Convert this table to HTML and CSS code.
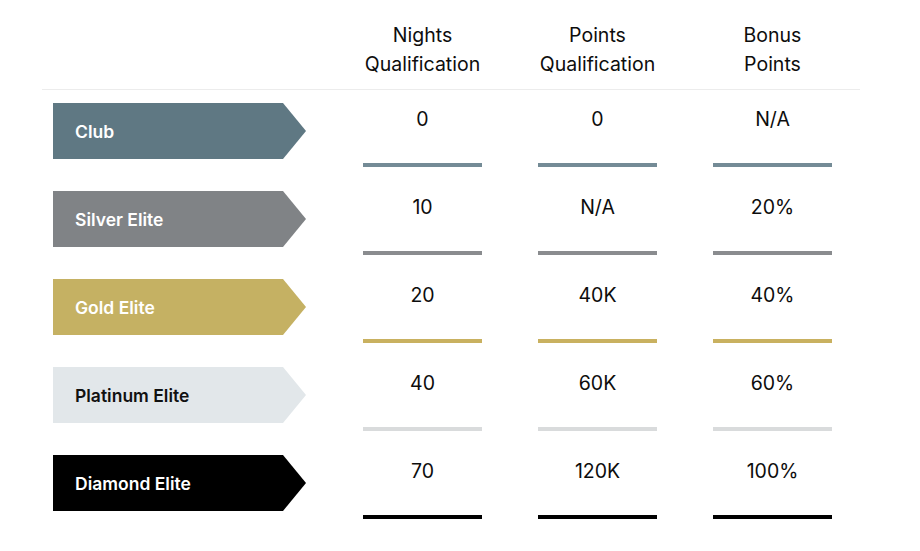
FILE: index.html
```html
<!DOCTYPE html>
<html lang="en">
<head>
<meta charset="utf-8">
<title>Tiers</title>
<link rel="stylesheet" href="styles.css">
</head>
<body>
<div class="table">
  <div class="head">
    <div class="hcell first"></div>
    <div class="hcell">Nights<br>Qualification</div>
    <div class="hcell">Points<br>Qualification</div>
    <div class="hcell">Bonus<br>Points</div>
  </div>

  <div class="row club">
    <div class="tier"><div class="banner">Club</div></div>
    <div class="val"><span>0</span><i class="bar"></i></div>
    <div class="val"><span>0</span><i class="bar"></i></div>
    <div class="val"><span>N/A</span><i class="bar"></i></div>
  </div>

  <div class="row silver">
    <div class="tier"><div class="banner">Silver Elite</div></div>
    <div class="val"><span>10</span><i class="bar"></i></div>
    <div class="val"><span>N/A</span><i class="bar"></i></div>
    <div class="val"><span>20%</span><i class="bar"></i></div>
  </div>

  <div class="row gold">
    <div class="tier"><div class="banner">Gold Elite</div></div>
    <div class="val"><span>20</span><i class="bar"></i></div>
    <div class="val"><span>40K</span><i class="bar"></i></div>
    <div class="val"><span>40%</span><i class="bar"></i></div>
  </div>

  <div class="row platinum">
    <div class="tier"><div class="banner">Platinum Elite</div></div>
    <div class="val"><span>40</span><i class="bar"></i></div>
    <div class="val"><span>60K</span><i class="bar"></i></div>
    <div class="val"><span>60%</span><i class="bar"></i></div>
  </div>

  <div class="row diamond">
    <div class="tier"><div class="banner">Diamond Elite</div></div>
    <div class="val"><span>70</span><i class="bar"></i></div>
    <div class="val"><span>120K</span><i class="bar"></i></div>
    <div class="val"><span>100%</span><i class="bar"></i></div>
  </div>
</div>
</body>
</html>
```

FILE: styles.css
```css
html, body {
  margin: 0;
  padding: 0;
  background: #ffffff;
}
body {
  font-family: "Inter", "Roboto", "Liberation Sans", sans-serif;
  color: #0d0d0d;
}
.table {
  margin-left: 42px;
  width: 818px;
}
.head {
  display: flex;
  height: 90px;
  box-sizing: border-box;
  padding-top: 21px;
  border-bottom: 1px solid #ececec;
}
.hcell {
  width: 175px;
  text-align: center;
  font-size: 19.5px;
  line-height: 29px;
}
.hcell.first, .tier {
  width: 293px;
  flex: none;
}
.row {
  display: flex;
  height: 88px;
  box-sizing: border-box;
  padding-top: 13px;
}
.tier {
  padding-left: 11px;
  box-sizing: border-box;
}
.banner {
  width: 253px;
  height: 56px;
  box-sizing: border-box;
  padding-left: 22px;
  padding-top: 1px;
  display: flex;
  align-items: center;
  font-size: 17.5px;
  font-weight: 600;
  color: #ffffff;
  clip-path: polygon(0 0, 230px 0, 100% 50%, 230px 100%, 0 100%);
}
.val {
  width: 175px;
  flex: none;
  display: flex;
  flex-direction: column;
  align-items: center;
  padding-top: 2px;
  font-size: 19.5px;
}
.val span {
  line-height: 28px;
}
.bar {
  display: block;
  width: 119px;
  height: 4px;
  margin-top: 30px;
}
.club .banner { background: #5f7883; }
.club .bar { background: #748b96; }
.silver .banner { background: #808386; }
.silver .bar { background: #8a8c8f; }
.gold .banner { background: #c5b163; }
.gold .bar { background: #c9b160; }
.platinum .banner { background: #e2e7ea; color: #111111; }
.platinum .bar { background: #d9dbdc; }
.diamond .banner { background: #000000; }
.diamond .bar { background: #000000; }
```
